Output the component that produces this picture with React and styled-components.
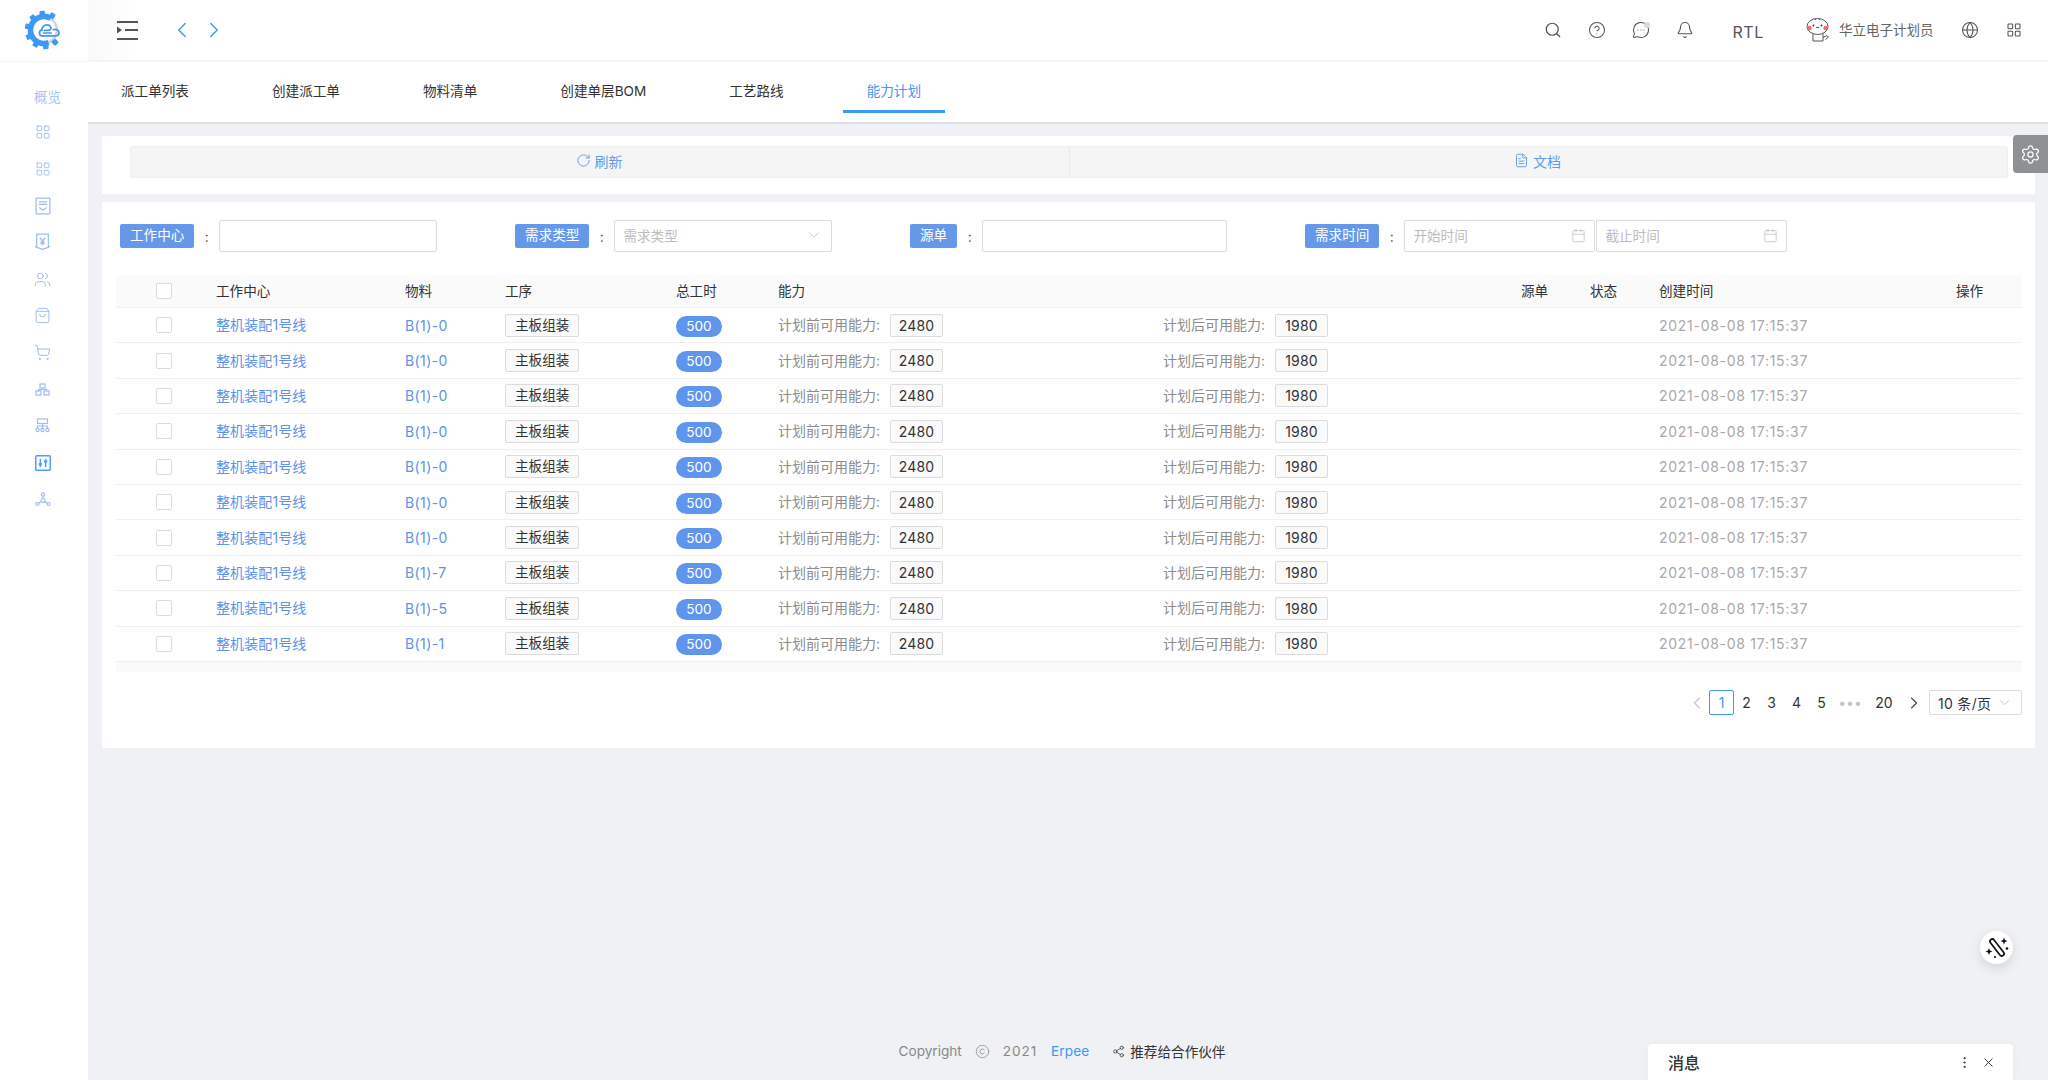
import React from 'react';
import styled, { createGlobalStyle } from 'styled-components';
import {
  Search, CircleHelp, MessageCircleMore, Bell, Globe, LayoutGrid, RotateCw, FileText, Settings,
  Share2, Calendar, ChevronDown, ChevronLeft, ChevronRight, Users, ShoppingBag,
  ShoppingCart, Copyright, EllipsisVertical, X,
} from 'lucide-react';

const GlobalStyle = createGlobalStyle`
  html, body { margin: 0; padding: 0; background: #eff1f5; }
  body { font-family: Inter, "Noto Sans CJK SC", sans-serif; font-size: 14px; color: #333; }
  * { box-sizing: border-box; }
`;

const Page = styled.div`
  display: flex;
  width: 2048px;
  height: 1080px;
  overflow: hidden;
  position: relative;
`;

const Sidebar = styled.aside`
  width: 88px;
  flex-shrink: 0;
  background: #fff;
`;

const LogoCell = styled.div`
  height: 62px;
  display: flex;
  align-items: center;
  padding: 0 0 2px 24px;
  border-bottom: 1px solid #f1f2f4;
`;

const Nav = styled.nav`
  display: flex;
  flex-direction: column;
  padding-top: 17px;
`;

const NavLabel = styled.div`
  height: 35px;
  line-height: 37px;
  padding-left: 34px;
  font-size: 13.5px;
  color: #a9c3ef;
`;

const NavItem = styled.div`
  width: 85px;
  height: 36.7px;
  display: flex;
  align-items: center;
  justify-content: center;
  color: ${p => (p.$active ? '#4f9ff8' : '#9fbcee')};
`;

const Main = styled.main`
  flex: 1;
  display: flex;
  flex-direction: column;
  min-width: 0;
`;

const Header = styled.header`
  height: 62px;
  flex-shrink: 0;
  display: flex;
  align-items: center;
  padding: 0 12px 0 29px;
  background: linear-gradient(90deg, #f9f9f9, #fff 50px);
  border-bottom: 2px solid #f5f5f6;
`;

const Arrows = styled.div`
  display: flex;
  gap: 6px;
  margin-left: 31px;
  color: #3f97f6;
`;

const HeaderRight = styled.div`
  margin-left: auto;
  display: flex;
  align-items: center;
  color: #555;
`;

const HeaderIcon = styled.div`
  position: relative;
  width: 43.8px;
  height: 44px;
  display: flex;
  align-items: center;
  justify-content: center;
`;

const ChatDot = styled.span`
  position: absolute;
  top: 14px;
  right: 13px;
  width: 6px;
  height: 6px;
  border-radius: 50%;
  background: #d9d9d9;
`;

const Rtl = styled.div`
  margin: 4px 42px 0 26px;
  font-size: 16px;
  letter-spacing: 0.6px;
  color: #555;
`;

const UserName = styled.div`
  margin: -3px 15px 0 9px;
  font-size: 13.5px;
  color: #666;
`;

const Tabs = styled.div`
  height: 62px;
  flex-shrink: 0;
  display: flex;
  gap: 35px;
  padding-left: 9px;
  background: #fff;
  border-bottom: 2px solid #dfe0e2;
`;

const Tab = styled.div`
  height: 51px;
  padding: 0 24px;
  line-height: 58px;
  font-size: 13.6px;
  color: ${p => (p.$active ? '#3f97f6' : '#333')};
  border-bottom: ${p => (p.$active ? '3px solid #3f97f6' : '3px solid transparent')};
`;

const Content = styled.div`
  padding: 12px 13px 0 14px;
  display: flex;
  flex-direction: column;
  gap: 8px;
`;

const ToolCard = styled.section`
  height: 58px;
  padding: 10px 27px 0 28px;
  background: #fff;
`;

const Toolbar = styled.div`
  height: 32px;
  display: grid;
  grid-template-columns: 1fr 1fr;
  background: #f5f5f5;
  border: 1px solid #efefef;
  border-radius: 2px;
`;

const ToolButton = styled.div`
  display: flex;
  align-items: center;
  justify-content: center;
  gap: 4px;
  padding: 0 2px 3px 0;
  color: #5f9bec;
  font-size: 14px;
  & + & { border-left: 1px solid #e9e9e9; }
`;

const TableCard = styled.section`
  height: 546px;
  padding: 18px 13px 0 14px;
  background: #fff;
`;

const FilterRow = styled.div`
  display: grid;
  grid-template-columns: 395px 395px 395px 1fr;
  padding-left: 4px;
  margin-bottom: 23px;
`;

const FilterItem = styled.div`
  display: flex;
  align-items: center;
  height: 32px;
`;

const FilterTag = styled.span`
  flex-shrink: 0;
  height: 24px;
  line-height: 23px;
  padding: 0 10px;
  border-radius: 2px;
  background: #6698ea;
  color: #fff;
  font-size: 13.6px;
  white-space: nowrap;
`;

const Colon = styled.span`
  flex-shrink: 0;
  width: 25px;
  text-align: center;
  color: #555;
`;

const Field = styled.div`
  flex-shrink: 0;
  width: ${p => p.$width}px;
  height: 32px;
  display: flex;
  align-items: center;
  justify-content: space-between;
  padding: 0 8px 2px;
  background: #fff;
  border: 1px solid #dcdcdc;
  border-radius: 2px;
  color: #bdbdbd;
  font-size: 13.6px;
  & + & { margin-left: 1px; }
`;

const Row = styled.div`
  display: grid;
  grid-template-columns: 100px 189px 100px 171px 102px 385px 358px 69px 69px 297px 66px;
  align-items: center;
  height: ${p => (p.$head ? '33px' : '35.4px')};
  background: ${p => (p.$head ? '#fafafa' : '#fff')};
  border-bottom: 1px solid #f0f0f0;
  color: ${p => (p.$head ? '#333' : '#8c8c8c')};
  font-size: 13.6px;
`;

const HeadCell = styled.span`
  margin-top: -2px;
`;

const CheckCell = styled.div`
  padding-left: 40px;
  display: flex;
`;

const Check = styled.span`
  width: 16px;
  height: 16px;
  background: #fff;
  border: 1px solid #dcdcdc;
  border-radius: 2px;
`;

const LineLink = styled.span`
  margin-top: -2px;
  font-size: 14px;
  letter-spacing: 0.1px;
  color: #5c93ea;
`;

const CodeLink = styled.span`
  font-size: 14px;
  letter-spacing: 0.4px;
  color: #5c93ea;
`;

const ProcessTag = styled.span`
  display: inline-block;
  height: 23px;
  line-height: 20px;
  padding: 0 9px;
  background: #fafafa;
  border: 1px solid #dcdcdc;
  border-radius: 2px;
  color: #333;
`;

const Pill = styled.span`
  display: inline-block;
  width: 46px;
  height: 21px;
  line-height: 21px;
  margin-top: 2px;
  text-align: center;
  border-radius: 11px;
  background: #5f95ec;
  color: #fff;
`;

const Capacity = styled.span`
  display: inline-flex;
  align-items: center;
  white-space: nowrap;
`;

const CapacityLabel = styled.span`
  width: 102px;
  margin-top: -2px;
  font-size: 14px;
`;

const CapacityValue = styled(ProcessTag)`
  width: 53px;
  padding: 0;
  line-height: 21px;
  text-align: center;
  font-size: 14px;
  letter-spacing: 0.2px;
  margin-left: 10px;
`;

const DateText = styled.span`
  font-size: 14px;
  letter-spacing: 0.72px;
  color: #a9a9a9;
`;

const TableFoot = styled.div`
  height: 10px;
  background: #fafafa;
`;

const Pager = styled.div`
  display: flex;
  align-items: center;
  justify-content: flex-end;
  height: 32px;
  margin-top: 15px;
  color: #333;
`;

const PagerItem = styled.span`
  width: ${p => p.$width || 25}px;
  text-align: center;
  font-size: 14px;
  color: ${p => (p.$muted ? '#c4c4c4' : '#333')};
`;

const PagerArrow = styled.span`
  width: 24px;
  display: flex;
  justify-content: center;
  color: ${p => (p.$muted ? '#c4c4c4' : '#444')};
`;

const PagerCurrent = styled.span`
  width: 25px;
  height: 25px;
  line-height: 23px;
  text-align: center;
  color: #3f97f6;
  border: 1px solid #3f97f6;
  border-radius: 2px;
`;

const PageSize = styled(Field)`
  width: 93px;
  height: 25px;
  margin-left: 3px;
  padding-bottom: 0;
  color: #333;
  font-size: 14px;
  letter-spacing: 0.3px;
  & svg { color: #bbb; }
`;

const Footer = styled.footer`
  margin-top: auto;
  height: 56px;
  flex-shrink: 0;
  display: flex;
  align-items: center;
  justify-content: center;
  padding: 0 12px 2px 0;
  color: #888;
  font-size: 13.6px;
`;

const FooterItem = styled.span`
  display: inline-flex;
  align-items: center;
  margin-left: ${p => p.$left}px;
  letter-spacing: ${p => p.$spacing || 0}px;
  color: ${p => p.$color || 'inherit'};
`;

const SettingsTab = styled.div`
  position: absolute;
  top: 135px;
  right: 0;
  width: 35px;
  height: 38px;
  display: flex;
  align-items: center;
  justify-content: center;
  background: #8e9194;
  border-radius: 4px 0 0 4px;
  color: #fff;
`;

const FloatButton = styled.div`
  position: absolute;
  top: 931px;
  left: 1980px;
  width: 33px;
  height: 33px;
  display: flex;
  align-items: center;
  justify-content: center;
  border-radius: 50%;
  background: #fff;
  box-shadow: 0 4px 12px rgba(0, 0, 0, 0.12);
`;

const MessagePanel = styled.div`
  position: absolute;
  left: 1648px;
  top: 1044px;
  width: 365px;
  height: 36px;
  display: flex;
  align-items: center;
  padding: 0 17px 0 20px;
  background: #fff;
  border-radius: 4px 4px 0 0;
  box-shadow: 0 2px 10px rgba(0, 0, 0, 0.04);
  color: #333;
`;

const MessageTitle = styled.span`
  font-size: 16px;
  font-weight: 500;
  margin-right: auto;
`;

const MessageActions = styled.span`
  display: flex;
  gap: 9px;
`;

const Logo = () => (
  <svg width="40" height="40" viewBox="0 0 40 40" fill="none">
    <circle cx="20" cy="20" r="13" stroke="#d3d5d8" strokeWidth="2.6" />
    <path d="M26.750 8.300A13.500 13.500 0 1 0 24.600 32.700" stroke="#3f97f6" strokeWidth="5.500" />
    <g fill="#3f97f6">
      {[30, -6, -42, -78, -114, -150, -186, -222].map(a => (
        <rect key={a} x="17.300" y="0.800" width="5.400" height="5.500" rx="1" transform={`rotate(${a} 20 20)`} />
      ))}
    </g>
    <g transform="translate(6.500 3) scale(.85)" stroke="#3f97f6" strokeWidth="2" strokeLinecap="round">
      <path d="M14 27c-2.200 0-3.500-1.600-3.500-3.400 0-1.800 1.200-3.200 3-3.400-.2-3.600 2.600-6.400 6-6.200 3 .1 5 2 4.600 4.200-.3 1.500-1.800 2.300-3.600 2.300h-4" />
      <path d="M27 19.500c.5-.1 1.400-.2 2-.2 2.500 0 4.500 1.800 4.500 4s-1.900 3.700-4.200 3.700H14" />
      <path d="M15.500 23.500h9" />
    </g>
  </svg>
);

const MenuIcon = () => (
  <svg width="21" height="19" viewBox="0 0 21 19" fill="#555">
    <rect y="0" width="21" height="2" />
    <rect x="8" y="8" width="13" height="2" />
    <rect y="17" width="21" height="2" />
    <path d="M0 5.500l5 3.500-5 3.500z" />
  </svg>
);

const Avatar = () => (
  <svg width="24" height="26" viewBox="0 0 24 26" fill="#fff" stroke="#555" strokeWidth="1">
    <path d="M7 16.500v7.500h10v-7.500" />
    <path d="M17 20.500l4-2 1.500 1.500-3 2.500" />
    <ellipse cx="11.500" cy="9.500" rx="10.500" ry="8" />
    <circle cx="3.500" cy="11" r="2.200" fill="#ec6a70" stroke="none" />
    <circle cx="19.500" cy="11" r="2.200" fill="#ec6a70" stroke="none" />
    <circle cx="7.500" cy="8.500" r="0.900" fill="#333" stroke="none" />
    <circle cx="15.500" cy="8.500" r="0.900" fill="#333" stroke="none" />
    <path d="M10 10.500h3M9 3l1-1.500M14 3l-1-1.500" />
  </svg>
);

const WandIcon = () => (
  <svg width="24" height="24" viewBox="0 0 24 24" fill="#111">
    <rect x="9.700" y="1.500" width="4.600" height="20" rx="2.300" fill="none" stroke="#111" strokeWidth="1.700" transform="rotate(-38 12 11.500)" />
    <path d="M19 1.500l1 2.500 2.500 1-2.500 1-1 2.500-1-2.500-2.500-1 2.500-1z" />
    <path d="M4 12l1 2.500 2.500 1-2.500 1-1 2.500-1-2.500-2.500-1 2.500-1z" />
    <circle cx="22" cy="12.500" r="1.300" />
    <circle cx="10" cy="21" r="1.100" />
  </svg>
);

const DocIcon = () => (
  <svg width="16" height="18" viewBox="0 0 15 17" fill="none" stroke="currentColor" strokeWidth="1.200">
    <rect x="1" y="1" width="13" height="15" rx="0.800" />
    <path d="M3.500 4.500h8M3.500 7h8M4 10l3.500 2.500L11 10" />
  </svg>
);

const YenIcon = () => (
  <svg width="17" height="18" viewBox="0 0 16 17" fill="none" stroke="currentColor" strokeWidth="1.200">
    <path d="M2.500 1h11v12.500L8 15.500l-5.500-2z" />
    <path d="M1 12.500l1.500 1M15 12.500l-1.500 1M5.500 4.500L8 7.500l2.500-3M8 7.500v4M6 8.500h4M6 10h4" />
  </svg>
);

const OrgSmallIcon = () => (
  <svg width="15" height="13" viewBox="0 0 15 13" fill="none" stroke="currentColor" strokeWidth="1.200">
    <rect x="5" y="1" width="5" height="4" />
    <rect x="1" y="8" width="5" height="4" />
    <rect x="9" y="8" width="5" height="4" />
    <path d="M3.500 8V6.500h8V8M7.500 5v1.500" />
  </svg>
);

const OrgLargeIcon = () => (
  <svg width="15" height="15" viewBox="0 0 15 15" fill="none" stroke="currentColor" strokeWidth="1.200">
    <rect x="2.500" y="1" width="10" height="4.500" />
    <circle cx="2.500" cy="12" r="1.600" />
    <circle cx="7.500" cy="12" r="1.600" />
    <circle cx="12.500" cy="12" r="1.600" />
    <path d="M7.500 5.500v5M2.500 10.400V8h10v2.400" />
  </svg>
);

const CapacityIcon = () => (
  <svg width="16" height="16" viewBox="0 0 15 15" fill="none" stroke="currentColor" strokeWidth="1.400">
    <rect x="0.700" y="0.700" width="13.600" height="13.600" rx="0.800" />
    <path d="M5 3.500v8M10 3.500v8" />
    <path d="M3.500 8.500h3M8.500 6h3" strokeWidth="2" />
  </svg>
);

const NodesIcon = () => (
  <svg width="16" height="15" viewBox="0 0 16 15" fill="none" stroke="currentColor" strokeWidth="1.200">
    <circle cx="8" cy="2.500" r="1.600" />
    <circle cx="8" cy="8.500" r="2" />
    <circle cx="2.300" cy="12" r="1.500" />
    <circle cx="13.700" cy="12" r="1.500" />
    <path d="M8 4.100v2.400M6.300 9.600l-2.700 1.600M9.700 9.600l2.700 1.600" />
  </svg>
);

const navIcons = [
  <LayoutGrid size={16} strokeWidth={1.4} />,
  <LayoutGrid size={16} strokeWidth={1.4} />,
  <DocIcon />,
  <YenIcon />,
  <Users size={17} strokeWidth={1.4} />,
  <ShoppingBag size={17} strokeWidth={1.4} />,
  <ShoppingCart size={17} strokeWidth={1.4} />,
  <OrgSmallIcon />,
  <OrgLargeIcon />,
  <CapacityIcon />,
  <NodesIcon />,
];

const tabs = ['派工单列表', '创建派工单', '物料清单', '创建单层BOM', '工艺路线', '能力计划'];
const materials = ['B(1)-0', 'B(1)-0', 'B(1)-0', 'B(1)-0', 'B(1)-0', 'B(1)-0', 'B(1)-0', 'B(1)-7', 'B(1)-5', 'B(1)-1'];
const columns = ['工作中心', '物料', '工序', '总工时', '能力', '', '源单', '状态', '创建时间', '操作'];

const App = () => (
  <Page>
    <GlobalStyle />
    <Sidebar>
      <LogoCell><Logo /></LogoCell>
      <Nav>
        <NavLabel>概览</NavLabel>
        {navIcons.map((icon, i) => (
          <NavItem key={i} $active={i === 9}>{icon}</NavItem>
        ))}
      </Nav>
    </Sidebar>
    <Main>
      <Header>
        <MenuIcon />
        <Arrows>
          <ChevronLeft size={26} strokeWidth={1.3} />
          <ChevronRight size={26} strokeWidth={1.3} />
        </Arrows>
        <HeaderRight>
          <HeaderIcon><Search size={18} strokeWidth={1.6} /></HeaderIcon>
          <HeaderIcon><CircleHelp size={18} strokeWidth={1.4} /></HeaderIcon>
          <HeaderIcon><MessageCircleMore size={18} strokeWidth={1.4} /><ChatDot /></HeaderIcon>
          <HeaderIcon><Bell size={18} strokeWidth={1.5} /></HeaderIcon>
          <Rtl>RTL</Rtl>
          <Avatar />
          <UserName>华立电子计划员</UserName>
          <HeaderIcon><Globe size={18} strokeWidth={1.4} /></HeaderIcon>
          <HeaderIcon><LayoutGrid size={16} strokeWidth={1.6} /></HeaderIcon>
        </HeaderRight>
      </Header>
      <Tabs>
        {tabs.map((t, i) => (
          <Tab key={t} $active={i === 5}>{t}</Tab>
        ))}
      </Tabs>
      <Content>
        <ToolCard>
          <Toolbar>
            <ToolButton><RotateCw size={15} strokeWidth={1.5} />刷新</ToolButton>
            <ToolButton><FileText size={15} strokeWidth={1.5} />文档</ToolButton>
          </Toolbar>
        </ToolCard>
        <TableCard>
          <FilterRow>
            <FilterItem>
              <FilterTag>工作中心</FilterTag><Colon>:</Colon><Field $width={218} />
            </FilterItem>
            <FilterItem>
              <FilterTag>需求类型</FilterTag><Colon>:</Colon>
              <Field $width={218}>需求类型<ChevronDown size={18} strokeWidth={1.1} /></Field>
            </FilterItem>
            <FilterItem>
              <FilterTag>源单</FilterTag><Colon>:</Colon><Field $width={245} />
            </FilterItem>
            <FilterItem>
              <FilterTag>需求时间</FilterTag><Colon>:</Colon>
              <Field $width={191}>开始时间<Calendar size={15} strokeWidth={1.2} /></Field>
              <Field $width={191}>截止时间<Calendar size={15} strokeWidth={1.2} /></Field>
            </FilterItem>
          </FilterRow>
          <Row $head>
            <CheckCell><Check /></CheckCell>
            {columns.map((c, i) => <HeadCell key={i}>{c}</HeadCell>)}
          </Row>
          {materials.map((m, i) => (
            <Row key={i}>
              <CheckCell><Check /></CheckCell>
              <LineLink>整机装配1号线</LineLink>
              <CodeLink>{m}</CodeLink>
              <span><ProcessTag>主板组装</ProcessTag></span>
              <span><Pill>500</Pill></span>
              <Capacity><CapacityLabel>计划前可用能力:</CapacityLabel><CapacityValue>2480</CapacityValue></Capacity>
              <Capacity><CapacityLabel>计划后可用能力:</CapacityLabel><CapacityValue>1980</CapacityValue></Capacity>
              <span />
              <span />
              <DateText>2021-08-08 17:15:37</DateText>
              <span />
            </Row>
          ))}
          <TableFoot />
          <Pager>
            <PagerArrow $muted><ChevronLeft size={20} strokeWidth={1.3} /></PagerArrow>
            <PagerCurrent>1</PagerCurrent>
            <PagerItem>2</PagerItem>
            <PagerItem>3</PagerItem>
            <PagerItem>4</PagerItem>
            <PagerItem>5</PagerItem>
            <PagerItem $muted $width={32}>•••</PagerItem>
            <PagerItem $width={36}>20</PagerItem>
            <PagerArrow><ChevronRight size={20} strokeWidth={1.3} /></PagerArrow>
            <PageSize>10 条/页<ChevronDown size={17} strokeWidth={1.1} /></PageSize>
          </Pager>
        </TableCard>
      </Content>
      <Footer>
        Copyright
        <FooterItem $left={13}><Copyright size={15} strokeWidth={1.2} /></FooterItem>
        <FooterItem $left={13} $spacing={0.9}>2021</FooterItem>
        <FooterItem $left={14} $color="#3f97f6" $spacing={0.1}>Erpee</FooterItem>
        <FooterItem $left={23} $color="#333"><Share2 size={13} strokeWidth={1.4} /></FooterItem>
        <FooterItem $left={5} $color="#333">推荐给合作伙伴</FooterItem>
      </Footer>
    </Main>
    <SettingsTab><Settings size={21} strokeWidth={1.4} /></SettingsTab>
    <FloatButton><WandIcon /></FloatButton>
    <MessagePanel>
      <MessageTitle>消息</MessageTitle>
      <MessageActions>
        <EllipsisVertical size={15} strokeWidth={1.5} />
        <X size={15} strokeWidth={1.5} />
      </MessageActions>
    </MessagePanel>
  </Page>
);

export default App;
